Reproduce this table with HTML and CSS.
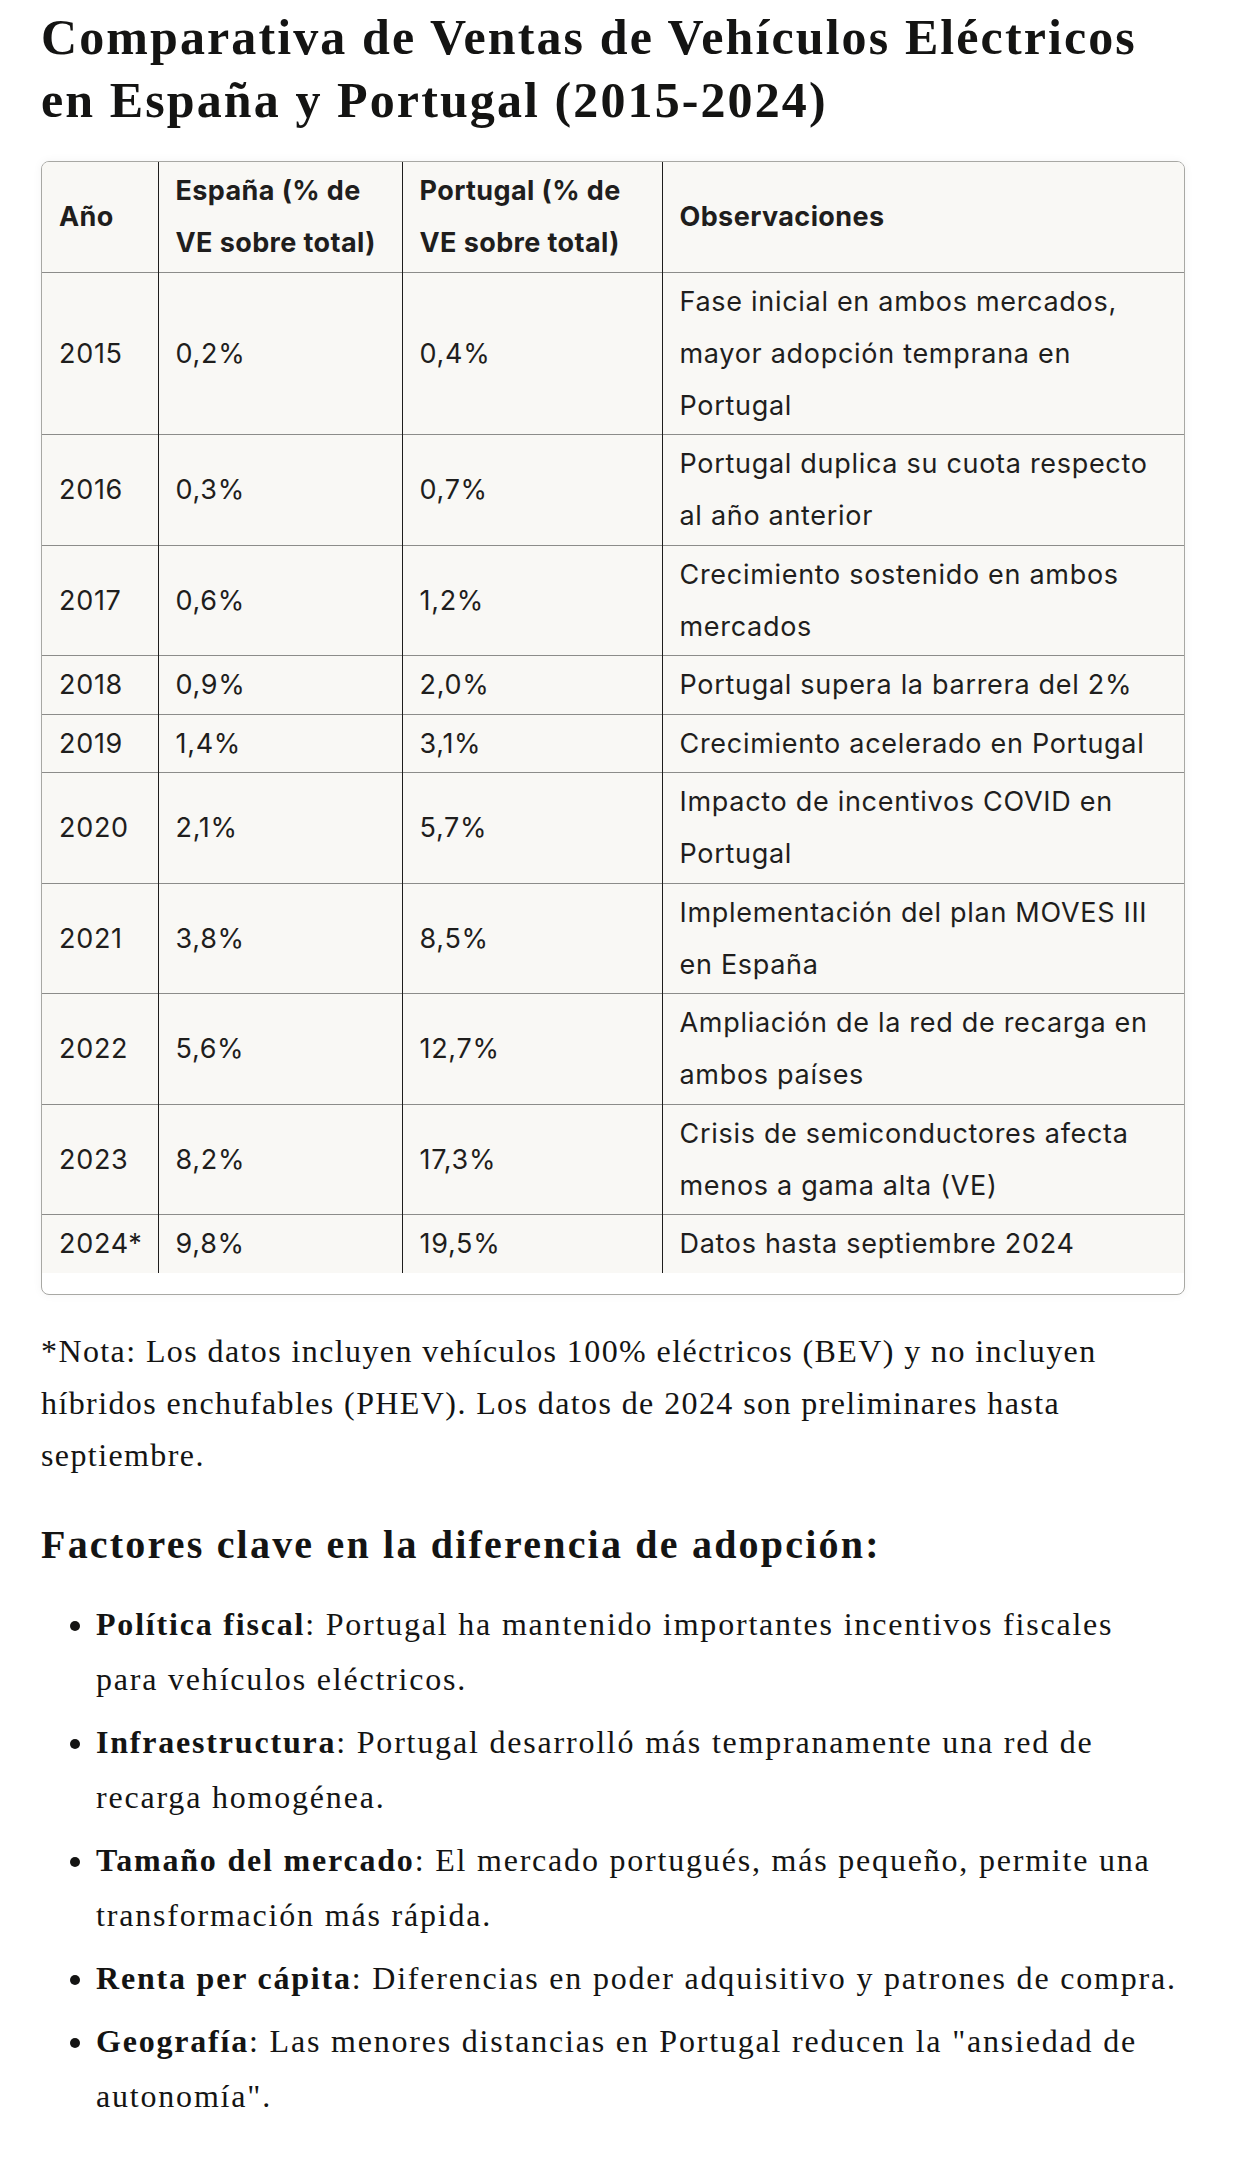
FILE: index.html
```html
<!DOCTYPE html>
<html lang="es">
<head>
<meta charset="utf-8">
<title>Comparativa de Ventas de Vehículos Eléctricos</title>
<link rel="stylesheet" href="styles.css">
</head>
<body>
<main class="doc">
  <h1 class="title">Comparativa de Ventas de Vehículos Eléctricos en España y Portugal (2015-2024)</h1>

  <div class="table-wrap">
    <table class="data">
      <colgroup>
        <col class="c1"><col class="c2"><col class="c3"><col class="c4">
      </colgroup>
      <thead>
        <tr>
          <th>Año</th>
          <th>España (% de VE sobre total)</th>
          <th>Portugal (% de VE sobre total)</th>
          <th>Observaciones</th>
        </tr>
      </thead>
      <tbody>
        <tr><td>2015</td><td>0,2%</td><td>0,4%</td><td>Fase inicial en ambos mercados, mayor adopción temprana en Portugal</td></tr>
        <tr><td>2016</td><td>0,3%</td><td>0,7%</td><td>Portugal duplica su cuota respecto al año anterior</td></tr>
        <tr><td>2017</td><td>0,6%</td><td>1,2%</td><td>Crecimiento sostenido en ambos mercados</td></tr>
        <tr><td>2018</td><td>0,9%</td><td>2,0%</td><td>Portugal supera la barrera del 2%</td></tr>
        <tr><td>2019</td><td>1,4%</td><td>3,1%</td><td>Crecimiento acelerado en Portugal</td></tr>
        <tr><td>2020</td><td>2,1%</td><td>5,7%</td><td>Impacto de incentivos COVID en Portugal</td></tr>
        <tr><td>2021</td><td>3,8%</td><td>8,5%</td><td>Implementación del plan MOVES III en España</td></tr>
        <tr><td>2022</td><td>5,6%</td><td>12,7%</td><td>Ampliación de la red de recarga en ambos países</td></tr>
        <tr><td>2023</td><td>8,2%</td><td>17,3%</td><td>Crisis de semiconductores afecta menos a gama alta (VE)</td></tr>
        <tr><td>2024*</td><td>9,8%</td><td>19,5%</td><td>Datos hasta septiembre 2024</td></tr>
      </tbody>
    </table>
  </div>

  <p class="note">*Nota: Los datos incluyen vehículos 100% eléctricos (BEV) y no incluyen híbridos enchufables (PHEV). Los datos de 2024 son preliminares hasta septiembre.</p>

  <h2 class="subtitle">Factores clave en la diferencia de adopción:</h2>

  <ul class="factors">
    <li><strong>Política fiscal</strong>: Portugal ha mantenido importantes incentivos fiscales para vehículos eléctricos.</li>
    <li><strong>Infraestructura</strong>: Portugal desarrolló más tempranamente una red de recarga homogénea.</li>
    <li><strong>Tamaño del mercado</strong>: El mercado portugués, más pequeño, permite una transformación más rápida.</li>
    <li><strong>Renta per cápita</strong>: Diferencias en poder adquisitivo y patrones de compra.</li>
    <li><strong>Geografía</strong>: Las menores distancias en Portugal reducen la "ansiedad de autonomía".</li>
  </ul>
</main>
</body>
</html>
```

FILE: styles.css
```css
html, body {
  margin: 0;
  padding: 0;
  background: #ffffff;
}

body {
  color: #141413;
  font-family: "Liberation Serif", "Times New Roman", serif;
}

.doc {
  width: 1144px;
  padding: 0 0 40px 41px;
}

.title {
  margin: 0;
  padding-top: 6px;
  font-family: "Liberation Serif", serif;
  font-weight: 700;
  font-size: 50px;
  line-height: 63px;
  letter-spacing: 2.1px;
}

.table-wrap {
  margin-top: 29px;
  border: 1px solid #a8a8a4;
  border-radius: 8px;
  overflow: hidden;
  background: #ffffff;
  padding-bottom: 21px;
  box-shadow: 0 0 10px rgba(0, 0, 0, 0.05);
}

.data {
  width: 100%;
  border-collapse: collapse;
  table-layout: fixed;
  background: #f9f8f5;
  font-family: Inter, "Liberation Sans", sans-serif;
  font-size: 27px;
  line-height: 52px;
  color: #1f1e1d;
}

.c1 { width: 116px; }
.c2 { width: 244px; }
.c3 { width: 260px; }

.data th,
.data td {
  padding: 3px 17px 2.5px;
  text-align: left;
  vertical-align: middle;
  border-top: 1px solid #8c8c8a;
  border-left: 1px solid #1f1e1d;
}

.data td {
  letter-spacing: 0.7px;
}

.data th {
  font-weight: 700;
  letter-spacing: 0.4px;
  border-top: none;
}

.data th:first-child,
.data td:first-child {
  border-left: none;
}

.note {
  margin: 30px 0 0;
  font-size: 32px;
  line-height: 52px;
  letter-spacing: 1.4px;
}

.subtitle {
  margin: 38px 0 0;
  font-size: 40px;
  line-height: 52px;
  font-weight: 700;
  letter-spacing: 2.2px;
}

.factors {
  margin: 26px 0 0;
  padding-left: 55px;
  font-size: 32px;
  line-height: 55px;
  letter-spacing: 1.8px;
}

.factors li {
  margin-bottom: 8px;
}

.factors strong {
  font-weight: 700;
}
```
